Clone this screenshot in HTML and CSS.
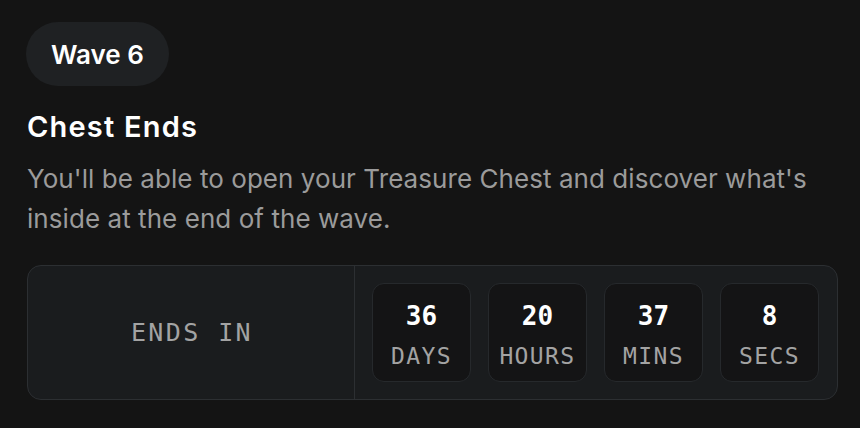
FILE: index.html
```html
<!DOCTYPE html>
<html>
<head>
<meta charset="utf-8">
<link rel="stylesheet" href="styles.css">
</head>
<body>
<div class="wrap">
  <div class="pill">Wave 6</div>
  <h2 class="title">Chest Ends</h2>
  <p class="desc">You'll be able to open your Treasure Chest and discover what's inside at the end of the wave.</p>
  <div class="card">
    <div class="ends">ENDS IN</div>
    <div class="units">
      <div class="unit"><div class="num">36</div><div class="lbl">DAYS</div></div>
      <div class="unit"><div class="num">20</div><div class="lbl">HOURS</div></div>
      <div class="unit"><div class="num">37</div><div class="lbl">MINS</div></div>
      <div class="unit"><div class="num">8</div><div class="lbl">SECS</div></div>
    </div>
  </div>
</div>
</body>
</html>
```
FILE: styles.css
```css
html, body {
  margin: 0;
  background: #141414;
}
body {
  font-family: Inter, "Noto Sans", sans-serif;
  color: #fff;
}
.wrap {
  padding: 22px 22px 0 27px;
  display: flex;
  flex-direction: column;
  align-items: flex-start;
}
.pill {
  height: 64px;
  padding: 0 25px;
  margin-left: -1px;
  border-radius: 32px;
  background: #1f2123;
  display: flex;
  align-items: center;
  font-size: 26px;
  font-weight: 600;
}
.title {
  margin: 23px 0 0;
  font-size: 29px;
  line-height: 36px;
  letter-spacing: 1.2px;
  font-weight: 600;
}
.desc {
  margin: 14px 0 0;
  font-size: 26px;
  line-height: 40px;
  letter-spacing: 0.06px;
  color: #9b9b9b;
}
.card {
  margin-top: 26px;
  align-self: stretch;
  display: flex;
  border: 1px solid #2c2f32;
  border-radius: 14px;
  background: #1a1c1e;
}
.ends {
  width: 327px;
  border-right: 1px solid #2c2f32;
  display: flex;
  align-items: center;
  justify-content: center;
  padding-left: 2px;
  box-sizing: border-box;
  font-family: "DejaVu Sans Mono", monospace;
  font-size: 25px;
  letter-spacing: 2.4px;
  color: #a3a3a3;
}
.units {
  display: flex;
  gap: 17px;
  padding: 17px;
}
.unit {
  width: 99px;
  height: 99px;
  box-sizing: border-box;
  padding-top: 17px;
  border: 1px solid #26292c;
  border-radius: 12px;
  background: #141415;
  display: flex;
  flex-direction: column;
  align-items: center;
  font-family: "DejaVu Sans Mono", monospace;
}
.num {
  font-size: 26px;
  font-weight: 700;
  line-height: 30px;
}
.lbl {
  margin-top: 10px;
  font-size: 23px;
  line-height: 30px;
  letter-spacing: 1.4px;
  color: #a3a3a3;
}
```
